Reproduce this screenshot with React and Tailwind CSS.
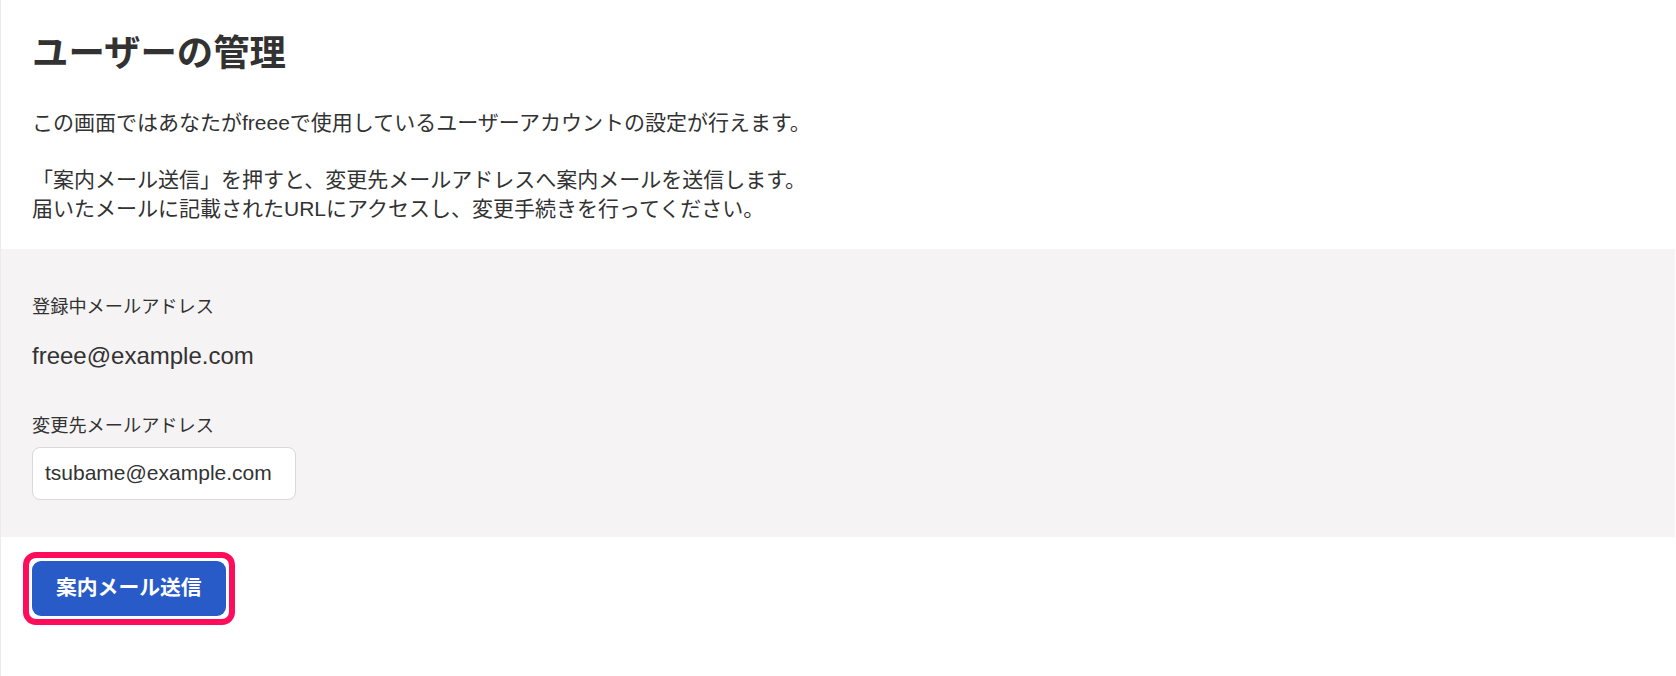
import React from "react";

export default function App() {
  return (
    <div className="min-h-[676px] w-full bg-white border-l border-[#ebebeb] text-[#323232] font-['Liberation_Sans','Noto_Sans_CJK_JP',sans-serif]">
      <div className="pl-[31px] pr-8 pt-[31px] pb-[26px]">
        <h1 className="text-[36.4px] font-bold leading-[46.8px]">ユーザーの管理</h1>
        <div className="mt-[31px] flex flex-col gap-[28.6px] text-[21px] leading-[28.6px]">
          <p>この画面ではあなたがfreeeで使用しているユーザーアカウントの設定が行えます。</p>
          <p>
            「案内メール送信」を押すと、変更先メールアドレスへ案内メールを送信します。
            <br />
            届いたメールに記載されたURLにアクセスし、変更手続きを行ってください。
          </p>
        </div>
      </div>

      <section className="bg-[#f5f3f4] pl-[31px] pt-[45px] pb-[37px] mr-px">
        <p className="text-[18.2px] leading-[27.3px]">登録中メールアドレス</p>
        <p className="mt-[17px] text-[24px] leading-[35px]">freee@example.com</p>
        <p className="mt-[40px] text-[18.2px] leading-[27.3px]">変更先メールアドレス</p>
        <input
          readOnly
          value="tsubame@example.com"
          className="mt-[6px] block w-[264px] h-[53px] px-[12px] rounded-[8px] border border-[#d9d9d9] bg-white text-[21px] text-[#323232] outline-none"
        />
      </section>

      <div className="pl-[31px] pt-[24px]">
        <div className="relative inline-block">
          <button className="h-[55px] px-[24px] rounded-[9px] bg-[#285ac8] text-white font-bold text-[20.8px] leading-none">
            案内メール送信
          </button>
          <span className="pointer-events-none absolute -inset-[9px] rounded-[13px] border-[6px] border-[#ff0c5a]" />
        </div>
      </div>
    </div>
  );
}
